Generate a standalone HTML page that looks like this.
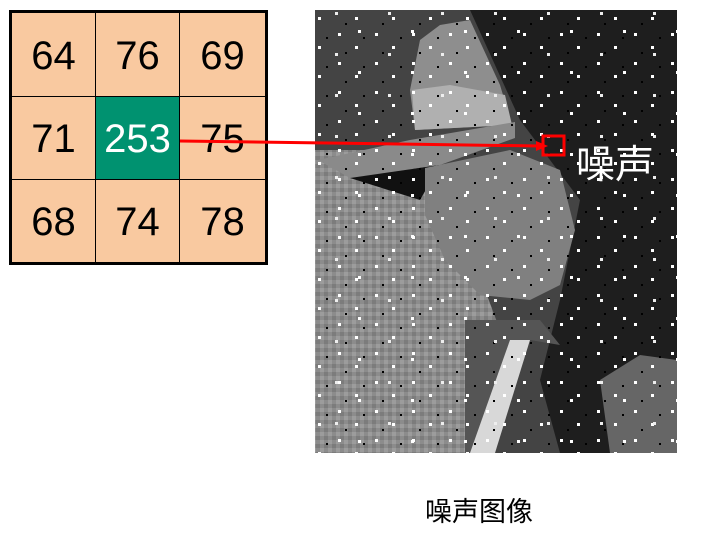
<!DOCTYPE html>
<html><head><meta charset="utf-8"><style>
html,body{margin:0;padding:0;background:#fff;width:701px;height:537px;overflow:hidden;position:relative;font-family:"Liberation Sans","Noto Sans CJK SC",sans-serif}
.grid{position:absolute;left:9px;top:10px;width:253px;height:249px;border:3px solid #000;background:#f9c9a0;display:grid;grid-template-columns:84px 84px 85px;grid-template-rows:84px 83px 82px}
.grid div{border-right:1px solid #000;border-bottom:1px solid #000;display:flex;align-items:center;justify-content:center;font-size:40px;color:#000;box-sizing:border-box;padding-top:3px}
.grid div:nth-child(3n){border-right:none}
.grid div:nth-child(n+7){border-bottom:none}
.grid .g{background:#009270;color:#fff}
</style></head><body>
<div class="grid">
<div>64</div><div>76</div><div>69</div>
<div>71</div><div class="g">253</div><div>75</div>
<div>68</div><div>74</div><div>78</div>
</div>
<svg style="position:absolute;left:0;top:0" width="701" height="537">
<defs>
<pattern id="tex" width="8" height="8" patternUnits="userSpaceOnUse"><rect width="8" height="8" fill="#8c8c8c"/><rect width="4" height="4" fill="#9c9c9c"/><rect x="4" y="4" width="4" height="4" fill="#7c7c7c"/></pattern>
<pattern id="dots" width="37" height="29" patternUnits="userSpaceOnUse"><rect x="5" y="4" width="3" height="3" fill="#fff"/><rect x="22" y="17" width="3" height="3" fill="#fff"/><rect x="30" y="8" width="2" height="2" fill="#000"/><rect x="12" y="23" width="2" height="2" fill="#000"/></pattern>
<pattern id="dots2" width="53" height="41" patternUnits="userSpaceOnUse"><rect x="40" y="30" width="3" height="3" fill="#fff"/><rect x="17" y="12" width="3" height="3" fill="#eee"/></pattern>
<clipPath id="c"><rect x="315" y="10" width="362" height="443"/></clipPath>
</defs>
<g clip-path="url(#c)">
<rect x="315" y="10" width="362" height="443" fill="#444"/>
<polygon points="470,10 677,10 677,453 560,453 540,380 560,300 580,200 520,120" fill="#1e1e1e"/>
<polygon points="315,150 400,150 470,250 500,330 480,453 315,453" fill="url(#tex)"/>
<polygon points="420,40 440,25 470,20 500,85 512,125 415,130 410,90" fill="#8e8e8e"/>
<polygon points="412,90 450,85 505,95 512,125 415,130" fill="#b0b0b0"/>
<polygon points="318,160 410,140 515,122 515,138 440,165 350,178" fill="#8a8a8a"/>
<polygon points="350,178 440,165 420,200" fill="#111"/>
<path d="M425,168 L510,150 L560,170 L575,230 L560,285 L530,300 L480,295 L445,260 L425,215 Z" fill="#808080"/>
<polygon points="465,320 540,320 560,345 530,340 490,453 465,453" fill="#555"/>
<polygon points="510,340 530,340 495,453 470,453" fill="#d8d8d8"/>
<polygon points="600,380 640,355 677,360 677,453 610,453" fill="#666"/>
<rect x="315" y="10" width="362" height="443" fill="url(#dots)"/>
<rect x="315" y="10" width="362" height="443" fill="url(#dots2)"/>
</g>
<line x1="180" y1="141" x2="540" y2="146" stroke="#f00" stroke-width="3"/>
<polygon points="548,146 536,141 536,151" fill="#f00"/>
<rect x="543" y="136" width="21" height="19" fill="none" stroke="#f00" stroke-width="3"/>
<text x="576" y="178" font-size="39" fill="#fff" font-family="Noto Sans CJK SC,sans-serif">噪声</text>
<text x="425" y="521" font-size="27" fill="#000" font-family="Noto Sans CJK SC,sans-serif">噪声图像</text>
</svg>
</body></html>
